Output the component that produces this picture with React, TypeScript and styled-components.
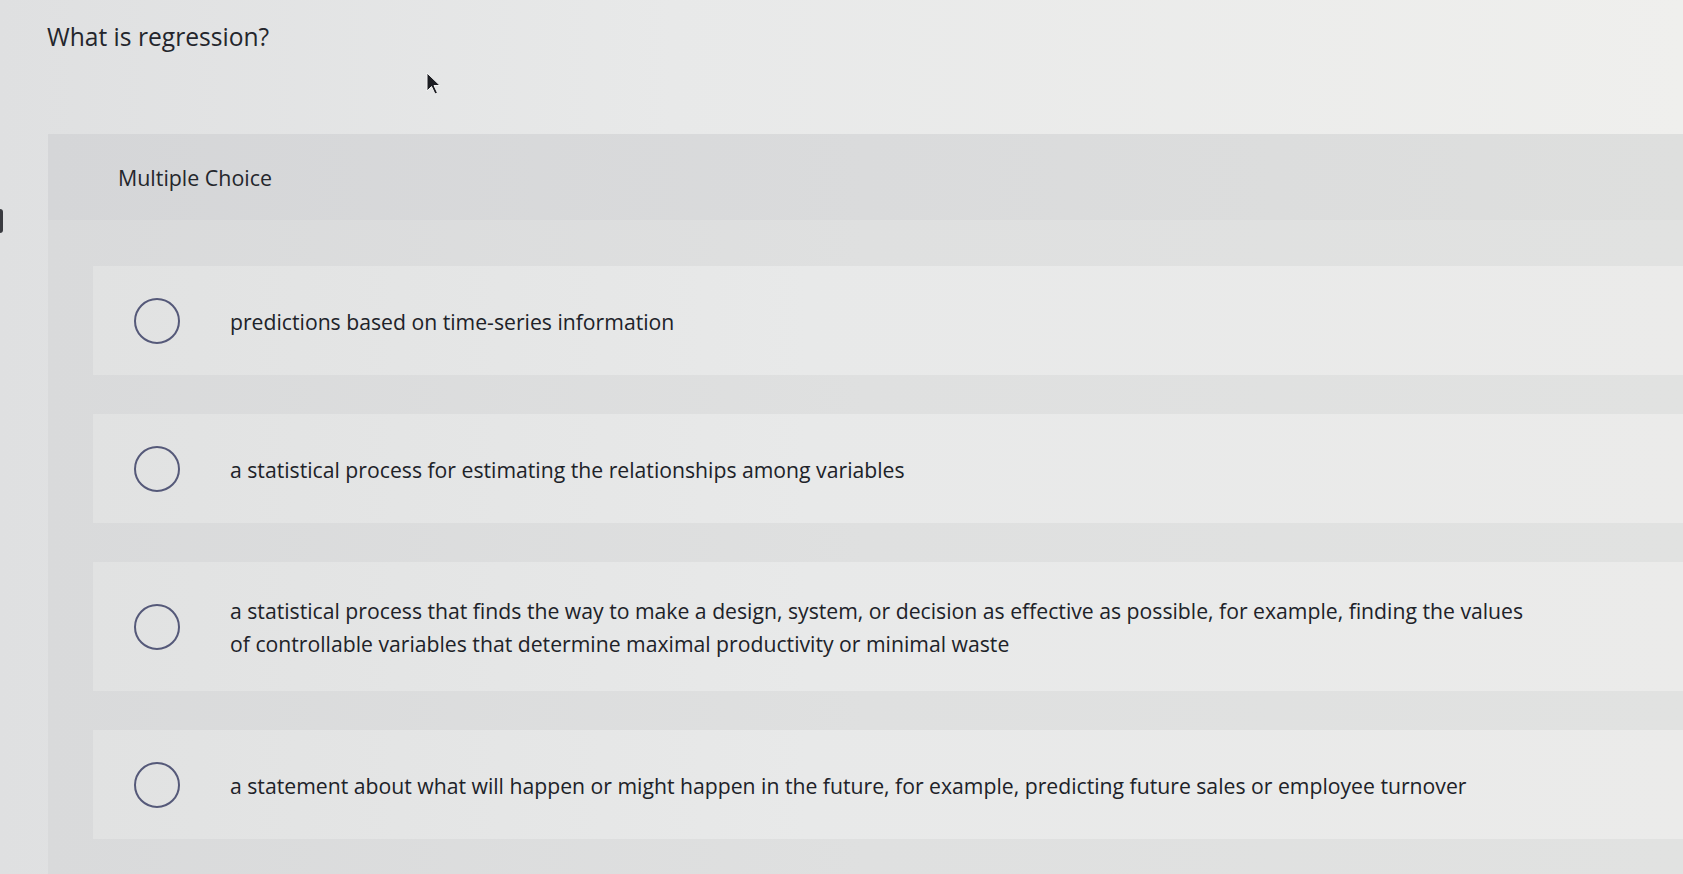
import React from "react";
import styled, { createGlobalStyle } from "styled-components";

const GlobalStyle = createGlobalStyle`
  html, body {
    margin: 0;
    padding: 0;
    background: #e5e6e6;
  }
  body {
    font-family: "Open Sans", Lato, "Liberation Sans", sans-serif;
    color: #2a2c32;
    overflow: hidden;
  }
`;

const Page = styled.div`
  position: relative;
  width: 1683px;
  height: 874px;
  box-sizing: border-box;
  padding: 21px 0 0 47px;
  background: linear-gradient(90deg, #dfe0e1 0%, #e8e9e9 40%, #efefed 100%);
  overflow: hidden;
`;

const BezelMark = styled.span`
  position: absolute;
  left: 0;
  top: 209px;
  width: 3px;
  height: 24px;
  border-radius: 0 3px 3px 0;
  background: #3a3b40;
`;

const Title = styled.h1`
  margin: 0;
  font-size: 24.6px;
  line-height: 32px;
  font-weight: 400;
  color: #24262c;
`;

const Panel = styled.section`
  margin: 81px 0 0 1px;
  display: flex;
  flex-direction: column;
`;

const PanelHeader = styled.div`
  height: 86px;
  display: flex;
  align-items: center;
  padding-left: 70px;
  background: linear-gradient(90deg, #d5d6d8 0%, #dadbdc 50%, #dedfde 100%);
  font-size: 21.4px;
  color: #24262c;
`;

const PanelBody = styled.div`
  padding: 46px 0 40px 45px;
  display: flex;
  flex-direction: column;
  gap: 39px;
  background: linear-gradient(90deg, #d9dadb 0%, #dfe0e0 50%, #e1e2e1 100%);
`;

const Option = styled.label`
  display: flex;
  align-items: center;
  gap: 50px;
  padding: 32px 0 31px 41px;
  background: linear-gradient(90deg, #e1e2e2 0%, #e8e9e9 45%, #ebebea 100%);
`;

const Radio = styled.span`
  flex: none;
  width: 42px;
  height: 42px;
  border: 2px solid #555979;
  border-radius: 50%;
`;

const OptionText = styled.span`
  max-width: 1302px;
  font-size: 21.2px;
  line-height: 33px;
  color: #202228;
`;

const Cursor = styled.svg`
  position: absolute;
  left: 426px;
  top: 72px;
`;

const options = [
  "predictions based on time-series information",
  "a statistical process for estimating the relationships among variables",
  "a statistical process that finds the way to make a design, system, or decision as effective as possible, for example, finding the values of controllable variables that determine maximal productivity or minimal waste",
  "a statement about what will happen or might happen in the future, for example, predicting future sales or employee turnover",
];

export default function App() {
  return (
    <>
      <GlobalStyle />
      <Page>
        <BezelMark />
        <Title>What is regression?</Title>
        <Cursor width="16" height="24" viewBox="0 0 16 24">
          <path d="M1 1 L1 19 L5.5 14.5 L9 22 L11.5 21 L8 13.5 L14 13.5 Z" fill="#1c1d22" stroke="#f2f2f2" strokeWidth="1" />
        </Cursor>
        <Panel>
          <PanelHeader>Multiple Choice</PanelHeader>
          <PanelBody>
            {options.map((o) => (
              <Option key={o}>
                <Radio />
                <OptionText>{o}</OptionText>
              </Option>
            ))}
          </PanelBody>
        </Panel>
      </Page>
    </>
  );
}
